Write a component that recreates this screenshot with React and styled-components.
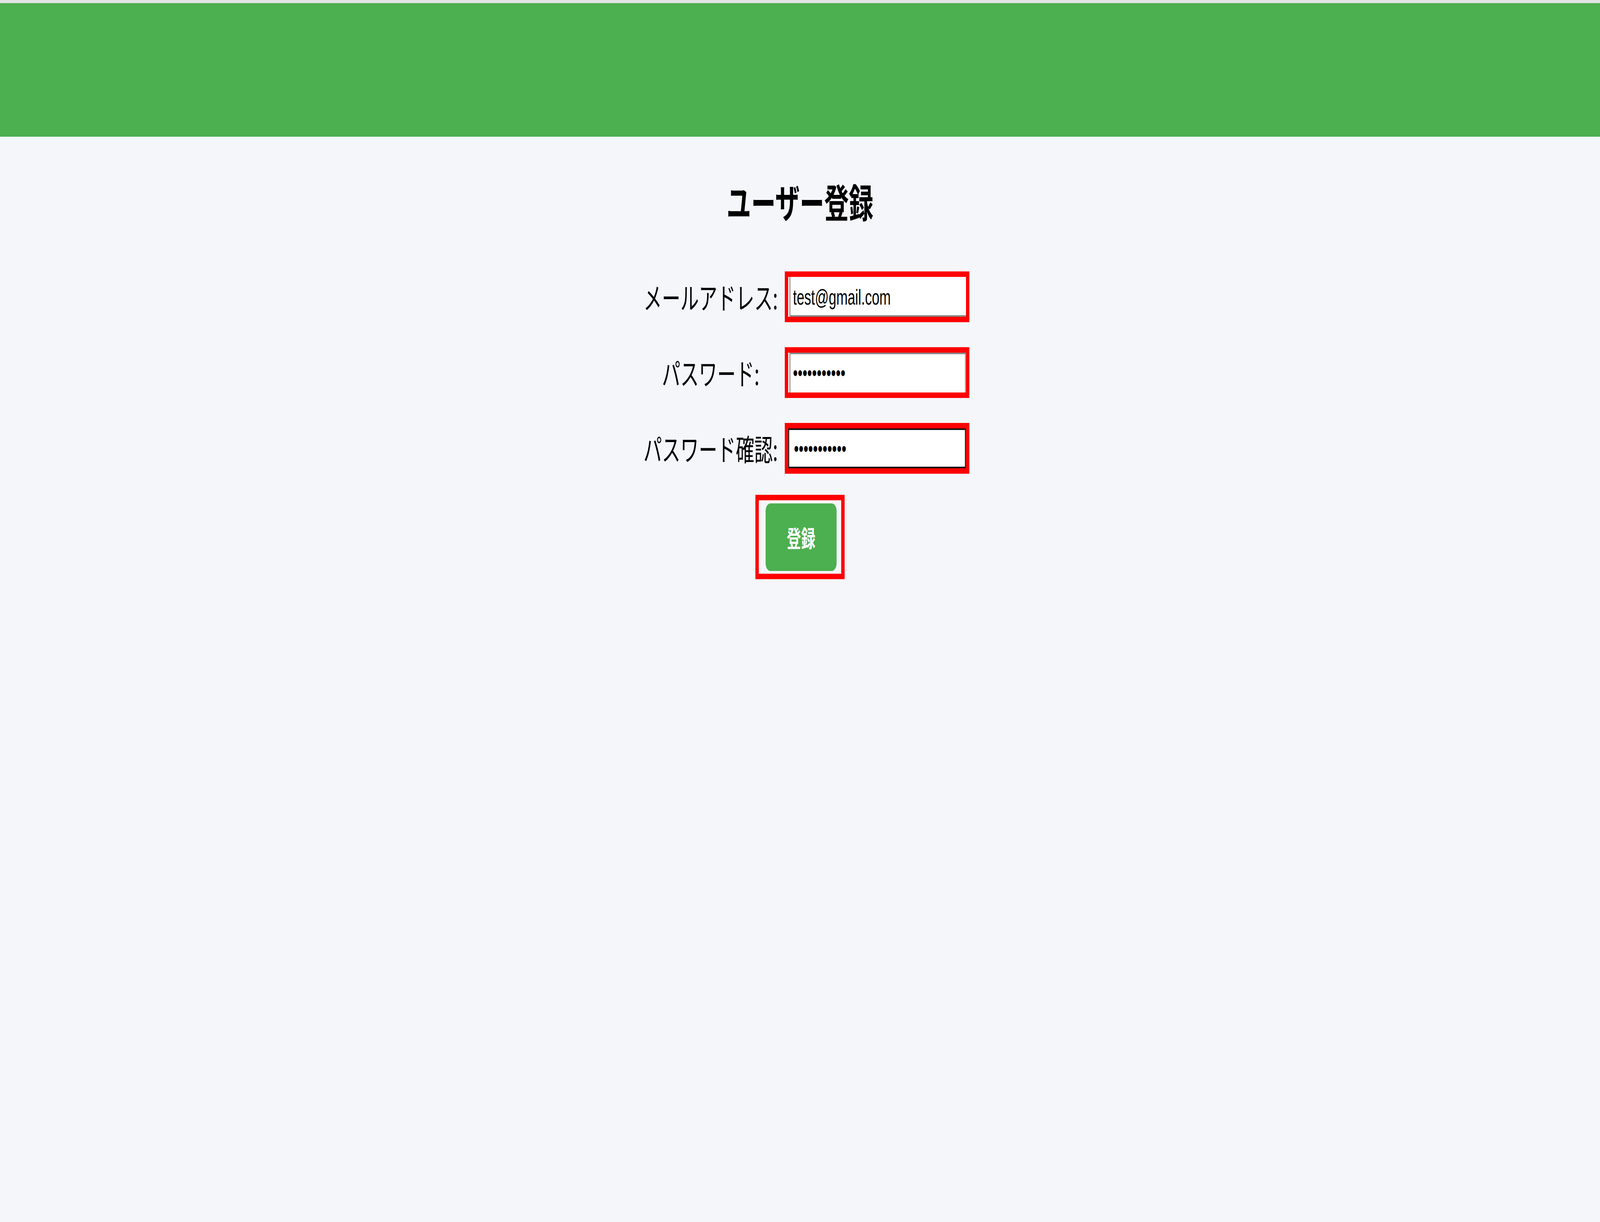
import React, { useState, useEffect } from "react";
import styled, { createGlobalStyle, css } from "styled-components";

// the layout is drawn for a 6581px wide window; narrower windows get it squeezed to fit
const DESIGN_WIDTH = 6581;

const GlobalStyle = createGlobalStyle`
  html, body {
    margin: 0;
    padding: 0;
    overflow: hidden;
    background: #f5f6fa;
    font-family: "Noto Sans CJK JP", "Noto Sans", sans-serif;
  }
`;

const Page = styled.div`
  width: ${DESIGN_WIDTH}px;
  min-height: 100vh;
  background: #f5f6fa;
  transform-origin: 0 0;
`;

const Header = styled.header`
  height: 342px;
  background: #4caf50;
  border-top: 8px solid #e4e4e4;
`;

const Main = styled.main`
  display: flex;
  flex-direction: column;
  align-items: center;
  padding-top: 104px;
`;

const Title = styled.h2`
  margin: 0 0 120px;
  font-size: 101px;
  font-weight: 700;
  line-height: 121px;
  color: #000;
`;

const Form = styled.form`
  display: flex;
  flex-direction: column;
  align-items: center;
`;

const Fields = styled.div`
  display: grid;
  grid-template-columns: auto auto;
  column-gap: 28px;
  row-gap: 64px;
  align-items: center;
  padding-left: 52px;
`;

const Label = styled.label`
  justify-self: center;
  font-size: 76px;
  line-height: 1.2;
  color: #000;
`;

const Highlight = styled.div`
  display: flex;
  border: 14px solid #ff0000;
`;

const edges = {
  plain: css`
    box-shadow: inset 5px 0 0 #fff, inset 9px 0 0 #8a8a8a, inset 0 -4px 0 #8a8a8a;
  `,
  raised: css`
    box-shadow: inset 5px 0 0 #fff, inset 9px 0 0 #8a8a8a, inset 0 4px 0 #8a8a8a,
      inset -4px 0 0 #9a9a9a;
  `,
  focused: css`
    border: 4px solid #111;
  `,
};

const Input = styled.input`
  box-sizing: border-box;
  width: 731px;
  height: 102px;
  margin: 0;
  padding: 0 20px;
  border: none;
  outline: none;
  background: #fff;
  font-family: "Liberation Sans", Arial, sans-serif;
  font-size: 56px;
  color: #000;
  ${(p) => edges[p.$edge]}
`;

const ButtonFrame = styled.div`
  margin-top: 54px;
  padding: 8px 19px 7px 28px;
  border: 14px solid #ff0000;
`;

const SubmitButton = styled.button`
  display: block;
  width: 292px;
  height: 173px;
  border: none;
  border-radius: 20px;
  background: #4caf50;
  color: #fff;
  font-family: "Noto Sans CJK JP", sans-serif;
  font-size: 59px;
  font-weight: 700;
  cursor: pointer;
`;

const App = () => {
  const [form, setForm] = useState({
    email: "test@gmail.com",
    password: "password123",
    confirm: "password123",
  });
  const [fit, setFit] = useState(1);

  useEffect(() => {
    const update = () => setFit(window.innerWidth / DESIGN_WIDTH);
    update();
    window.addEventListener("resize", update);
    return () => window.removeEventListener("resize", update);
  }, []);

  const handleChange = (e) => {
    const { name, value } = e.target;
    setForm((prev) => ({ ...prev, [name]: value }));
  };

  return (
    <Page style={{ transform: `scaleX(${fit})` }}>
      <GlobalStyle />
      <Header />
      <Main>
        <Title>ユーザー登録</Title>
        <Form onSubmit={(e) => e.preventDefault()}>
          <Fields>
            <Label>メールアドレス:</Label>
            <Highlight>
              <Input $edge="plain" type="email" name="email" value={form.email} onChange={handleChange} />
            </Highlight>
            <Label>パスワード:</Label>
            <Highlight>
              <Input $edge="raised" type="password" name="password" value={form.password} onChange={handleChange} />
            </Highlight>
            <Label>パスワード確認:</Label>
            <Highlight>
              <Input $edge="focused" type="password" name="confirm" value={form.confirm} onChange={handleChange} />
            </Highlight>
          </Fields>
          <ButtonFrame>
            <SubmitButton type="submit">登録</SubmitButton>
          </ButtonFrame>
        </Form>
      </Main>
    </Page>
  );
};

export default App;
